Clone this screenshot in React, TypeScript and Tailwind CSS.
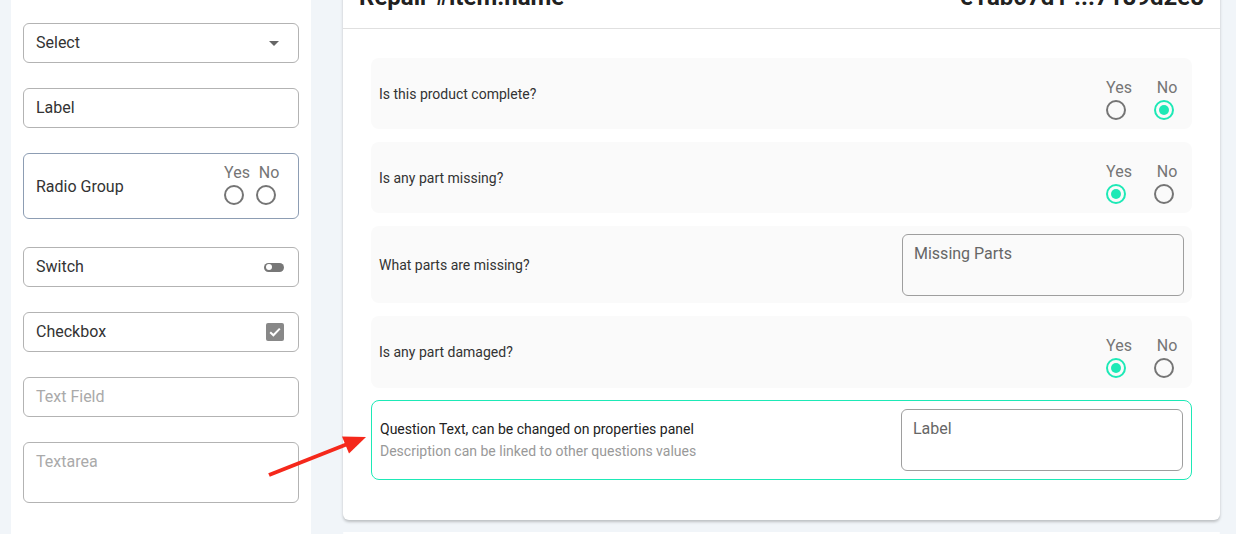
import React from "react";

function Radio({ checked = false }: { checked?: boolean }) {
  return checked ? (
    <span className="w-5 h-5 rounded-full border-2 border-[#1de9b6] flex items-center justify-center">
      <span className="w-2.5 h-2.5 rounded-full bg-[#1de9b6]" />
    </span>
  ) : (
    <span className="w-5 h-5 rounded-full border-2 border-[#757575]" />
  );
}

function YesNo({ value, col = "w-12" }: { value?: "yes" | "no"; col?: string }) {
  return (
    <div className="flex">
      {["Yes", "No"].map((opt) => (
        <div key={opt} className={`${col} flex flex-col items-center`}>
          <span className="ml-[6px] text-base leading-6 text-[#757575]">{opt}</span>
          <Radio checked={value === opt.toLowerCase()} />
        </div>
      ))}
    </div>
  );
}

function SideBox({ children, className = "" }: { children: React.ReactNode; className?: string }) {
  return (
    <div className={`h-10 border border-[#b3b3b3] rounded-md pl-3 pr-[14px] flex items-center justify-between text-base text-[#333] ${className}`}>
      {children}
    </div>
  );
}

function Textarea({ placeholder }: { placeholder: string }) {
  return (
    <div className="w-[282px] h-[62px] border border-[#9e9e9e] rounded-md pl-[11px] pt-[9px] text-base leading-5 text-[#666]">
      {placeholder}
    </div>
  );
}

function Row({ h, children }: { h: string; children: React.ReactNode }) {
  return <div className={`${h} bg-[#fafafa] rounded-lg pl-2 pr-2 flex justify-between`}>{children}</div>;
}

export default function App() {
  return (
    <div className="relative h-[534px] overflow-hidden bg-[#f1f5f9] flex font-['Roboto',sans-serif]">
      {/* Toolbox */}
      <aside className="ml-[11px] w-[300px] bg-white px-3 pt-[23px] flex flex-col">
        <SideBox>
          <span>Select</span>
          <svg width="10" height="5" viewBox="0 0 10 5" className="mr-[5px]">
            <path d="M0 0h10L5 5z" fill="#666" />
          </svg>
        </SideBox>
        <SideBox className="mt-[25px]">
          <span>Label</span>
        </SideBox>
        <div className="mt-[25px] h-[66px] border border-[#8d9db3] rounded-md pl-3 pr-[16px] flex justify-between text-base text-[#333]">
          <span className="self-center pt-[1px]">Radio Group</span>
          <div className="pt-[7px]">
            <YesNo col="w-8" />
          </div>
        </div>
        <SideBox className="mt-[28px]">
          <span>Switch</span>
          <span className="w-5 h-[9px] rounded-full bg-[#777] flex items-center pl-[1.5px]">
            <span className="w-[6px] h-[6px] rounded-full bg-white" />
          </span>
        </SideBox>
        <SideBox className="mt-[25px]">
          <span>Checkbox</span>
          <span className="w-[18px] h-[18px] rounded-[2px] bg-[#888] flex items-center justify-center">
            <svg width="12" height="10" viewBox="0 0 12 10">
              <path d="M1.2 5.2l3.2 3.1L10.8 1.6" stroke="white" strokeWidth="2" fill="none" />
            </svg>
          </span>
        </SideBox>
        <SideBox className="mt-[25px]">
          <span className="text-[#aaa]">Text Field</span>
        </SideBox>
        <div className="mt-[25px] h-[61px] border border-[#b3b3b3] rounded-md pl-3 pt-[9px] text-base leading-5 text-[#aaa]">
          Textarea
        </div>
      </aside>

      {/* Survey */}
      <main className="ml-[32px] w-[877px] flex flex-col">
        <div className="-mt-[35px] bg-white rounded-md shadow-[0_2px_3px_rgba(0,0,0,0.22)]">
          <div className="h-16 px-4 flex items-center justify-between border-b border-[#e0e0e0] text-2xl leading-8 font-bold text-[#212121]">
            <span>Repair #item.name</span>
            <span>e1ab07d1 ...7189d2e8</span>
          </div>
          <div className="px-7 pt-[29px] pb-10 flex flex-col gap-[13px] text-sm text-[#333]">
            <Row h="h-[71px]">
              <span className="self-center">Is this product complete?</span>
              <div className="mt-[18px] -mr-1">
                <YesNo value="no" />
              </div>
            </Row>
            <Row h="h-[71px]">
              <span className="self-center">Is any part missing?</span>
              <div className="mt-[18px] -mr-1">
                <YesNo value="yes" />
              </div>
            </Row>
            <Row h="h-[77px]">
              <span className="self-center">What parts are missing?</span>
              <div className="mt-2">
                <Textarea placeholder="Missing Parts" />
              </div>
            </Row>
            <Row h="h-[72px]">
              <span className="self-center">Is any part damaged?</span>
              <div className="mt-[18px] -mr-1">
                <YesNo value="yes" />
              </div>
            </Row>
            <div className="-mt-px h-[80px] border border-[#1de9b6] rounded-lg pl-2 pr-2 flex justify-between items-start">
              <div className="self-center leading-[22px]">
                <div className="text-[#222]">Question Text, can be changed on properties panel</div>
                <div className="text-[#999]">Description can be linked to other questions values</div>
              </div>
              <div className="mt-2">
                <Textarea placeholder="Label" />
              </div>
            </div>
          </div>
        </div>
        <div className="mt-3 h-10 bg-white rounded-md" />
      </main>

      {/* Annotation arrow */}
      <svg className="absolute left-0 top-0 pointer-events-none" width="1236" height="534" viewBox="0 0 1236 534">
        <line x1="269" y1="475" x2="350" y2="443" stroke="#f5281b" strokeWidth="4" />
        <polygon points="366,437 342,436.5 349,453.5" fill="#f5281b" />
      </svg>
    </div>
  );
}
